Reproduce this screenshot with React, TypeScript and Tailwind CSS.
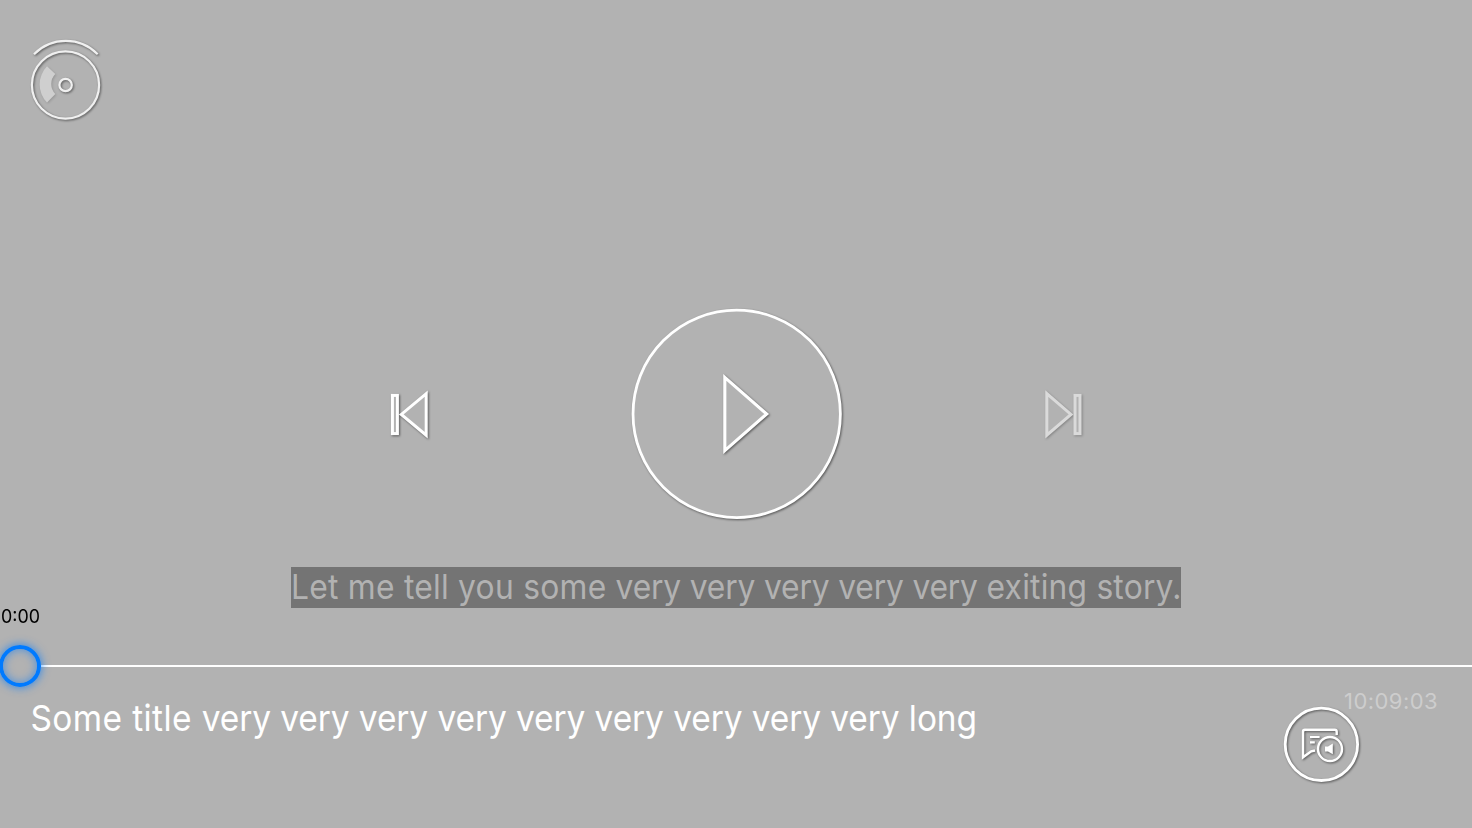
import React from 'react';

const shadow = '[filter:drop-shadow(1px_1px_1px_rgba(0,0,0,0.5))]';

function DiscIcon() {
  return (
    <svg width="95" height="100" viewBox="0 0 95 100" fill="none" stroke="#f0f0f0" strokeWidth="2.2">
      <g className={shadow}>
        <path d="M14 24.3A44.7 44.7 0 0 1 77.7 24.3" />
        <circle cx="45.5" cy="55" r="33.6" />
        <circle cx="45.6" cy="55" r="6.2" />
      </g>
      <path d="M27 36.3L35.3 44A14.3 14.3 0 0 0 35.3 64L27 72.5A26 26 0 0 1 27 36.3Z" fill="#cfcfcf" stroke="none" className="[filter:drop-shadow(1px_1px_1px_rgba(0,0,0,0.15))]" />
    </svg>
  );
}

function PreviousIcon() {
  return (
    <svg width="60" height="70" viewBox="0 0 60 70" fill="#b2b2b2" stroke="white" strokeWidth="3" className={shadow}>
      <path d="M46.2 13.6V55.2L21.3 34.4Z" />
      <rect x="12.4" y="15.4" width="5" height="38.2" strokeWidth="3" />
    </svg>
  );
}

function NextIcon() {
  return (
    <svg width="60" height="70" viewBox="0 0 60 70" fill="#b2b2b2" stroke="#dadada" strokeWidth="3" className="[filter:drop-shadow(1px_1px_1px_rgba(0,0,0,0.25))]">
      <path d="M12.8 13.6V55.2L37 34.4Z" />
      <rect x="41" y="15.4" width="5" height="38.2" strokeWidth="3" />
    </svg>
  );
}

function PlayIcon() {
  return (
    <svg width="235" height="230" viewBox="0 0 235 230" fill="#b2b2b2" stroke="white">
      <circle cx="116.7" cy="113.9" r="103.7" strokeWidth="2.8" className={shadow} />
      <path d="M104.8 77.4V150.6L146.7 114Z" strokeWidth="3.1" className={shadow} />
    </svg>
  );
}

function CaptionsIcon() {
  return (
    <svg width="104" height="115" viewBox="0 0 104 115" fill="none" stroke="white" strokeWidth="2.4" className={shadow}>
      <circle cx="51.4" cy="64.3" r="36.2" strokeWidth="2.8" />
      <path d="M66.7 55V51.8Q66.7 49.8 64.7 49.8H35Q33 49.8 33 51.8V77.3L41.2 71.3L45 70.5" />
      <path d="M40 57H49.6M40 62.4H44.8" strokeWidth="2.2" />
      <circle cx="60" cy="69" r="12" strokeWidth="2.4" />
      <path d="M55 66.4H58L62.8 63.6V74.2L58 71.4H55Z" fill="white" stroke="none" />
    </svg>
  );
}

export default function App() {
  return (
    <main className="flex h-[828px] w-[1472px] flex-col overflow-hidden bg-[#b2b2b2] font-['Inter',sans-serif] text-white">
      <header className="flex h-[300px] pt-[30px] pl-5">
        <button aria-label="Disc" className="h-[100px] w-[95px]">
          <DiscIcon />
        </button>
      </header>

      <section className="flex h-[267px] items-start pl-[380px]">
        <button aria-label="Previous" className="mt-20">
          <PreviousIcon />
        </button>
        <button aria-label="Play" className="ml-[180px]">
          <PlayIcon />
        </button>
        <button aria-label="Next" className="mt-20 ml-[179px]">
          <NextIcon />
        </button>
      </section>

      <div className="flex h-[39px] justify-center">
        <p className="h-[41px] w-[890px] shrink-0 bg-[#747474] text-[34px] leading-[40px] whitespace-nowrap text-[#b2b2b2]">
          <span className="inline-block origin-left translate-y-[0.4px] scale-x-[0.936]">
            <span className="tracking-[0.25px]">Let me tell you some </span>
            <span className="tracking-[-0.2px]">very very very very very </span>
            <span className="tracking-[0.2px]">exiting story.</span>
          </span>
        </p>
      </div>

      <div className="h-[39px] pl-px text-[19px] leading-[22px] text-black">
        <span className="inline-block origin-left scale-x-[0.94]">0:00</span>
      </div>

      <div className="flex h-[42px] items-center">
        <div className="z-10 -ml-px size-[42px] shrink-0 rounded-full border-4 border-[#007aff] shadow-[0_0_10px_#007affcc,inset_0_0_10px_#007aff99]" />
        <div className="h-0.5 flex-1 bg-white" />
      </div>

      <footer className="flex h-[141px] items-start justify-between pl-[30px]">
        <h1 className="mt-2 origin-left translate-x-[0.5px] translate-y-[0.5px] scale-x-[0.93] text-[36px] leading-[44px] whitespace-nowrap">
          <span className="tracking-[0.42px]">Some title </span>
          <span className="tracking-[-0.1px]">very very very very very very very very very long</span>
        </h1>
        <div className="-mt-[7px] flex w-[202px] shrink-0 items-start">
          <button aria-label="Captions" className="shrink-0">
            <CaptionsIcon />
          </button>
          <time className="-ml-[30px] mt-[7px] text-[22px] leading-7 tracking-[0.45px] whitespace-nowrap text-[#cdcdcd]">10:09:03</time>
        </div>
      </footer>
    </main>
  );
}
